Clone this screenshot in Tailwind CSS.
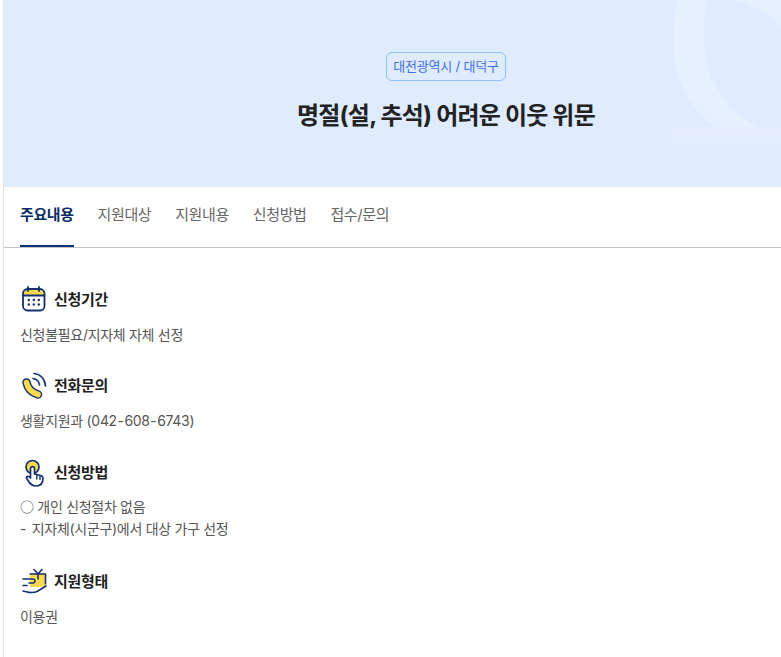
<!DOCTYPE html>
<html lang="ko">
  <head>
    <meta charset="UTF-8" />
    <script src="https://cdn.jsdelivr.net/npm/@tailwindcss/browser@4"></script>
    <title>명절(설, 추석) 어려운 이웃 위문</title>
  </head>
  <body class="bg-white font-['Inter','Noto_Sans_CJK_KR',sans-serif] overflow-hidden">
    <div class="ml-[3px] h-[657px] border-l border-[#e2e2e2] overflow-hidden">
      <!-- banner -->
      <div class="relative h-[187px] pl-[107px] bg-[#dfebff] overflow-hidden flex flex-col items-center">
        <svg class="absolute left-[650px] top-0" width="127" height="187" viewBox="0 0 127 187" fill="none">
          <defs>
            <linearGradient id="fade" x1="0" y1="0" x2="0" y2="1">
              <stop offset="0" stop-color="#e4eeff"/>
              <stop offset="1" stop-color="#dfebff"/>
            </linearGradient>
          </defs>
          <path d="M24 0C20 13 19 28 19 40C19 84 42 118 72 135L127 135L127 0Z" fill="#e7f0ff"/>
          <path d="M54 0C50 13 50 28 50 40C50 88 87 128 127 135L127 26C110 10 90 0 68 0Z" fill="#dfebff"/>
          <rect x="18" y="127" width="109" height="42" fill="url(#fade)"/>
        </svg>
        <div class="relative mt-[52px] h-[29px] px-[6px] flex items-center rounded-[6px] border border-[#8fc0fb] text-[13px] tracking-[-0.2px] text-[#3f6ff0]">대전광역시 / 대덕구</div>
        <h1 class="relative mt-[18px] text-[24px] leading-[34px] font-bold tracking-[-0.8px] text-[#222222]">명절(설, 추석) 어려운 이웃 위문</h1>
      </div>

      <!-- tabs -->
      <div class="h-[61px] border-b border-[#c4c4c4] pl-[16px] flex gap-[24px] text-[15px] tracking-[-0.4px] text-[#666666]">
        <a class="h-[60px] pt-[17px] font-bold text-[#0b2c63] border-b-2 border-[#0b3279]">주요내용</a>
        <a class="pt-[17px]">지원대상</a>
        <a class="pt-[17px]">지원내용</a>
        <a class="pt-[17px]">신청방법</a>
        <a class="pt-[17px]">접수/문의</a>
      </div>

      <!-- content -->
      <div class="pl-[16px] pt-[37px] text-[14px] leading-[22px] tracking-[-0.3px] text-[#555555]">
        <div class="h-[30px] flex items-center gap-[6px]">
          <svg class="w-[28px] h-[28px]" viewBox="0 0 28 28" fill="none">
            <path d="M3 9V6A3.500 3.500 0 0 1 6.500 3h14A3.500 3.500 0 0 1 24 6V9Z" fill="#fbd94e"/>
            <rect x="3" y="3" width="21.500" height="21.500" rx="4.500" stroke="#12316e" stroke-width="1.800"/>
            <path d="M3 9.500H24.500M8 1V5M19 1V5" stroke="#12316e" stroke-width="1.800" stroke-linecap="round"/>
            <g fill="#12316e"><circle cx="8.800" cy="14" r="1.200"/><circle cx="13.800" cy="14" r="1.200"/><circle cx="18.800" cy="14" r="1.200"/><circle cx="8.800" cy="18.500" r="1.200"/><circle cx="13.800" cy="18.500" r="1.200"/><circle cx="18.800" cy="18.500" r="1.200"/></g>
          </svg>
          <h3 class="text-[15px] font-bold text-[#1e1e1e]">신청기간</h3>
        </div>
        <p class="mt-[9px]">신청불필요/지자체 자체 선정</p>

        <div class="mt-[25px] h-[30px] flex items-center gap-[6px]">
          <svg class="w-[28px] h-[28px]" viewBox="0 0 28 28" fill="none">
            <path d="M6.500 10.500C7.500 16 12 20.500 18 22.500" stroke="#12316e" stroke-width="8.500" stroke-linecap="round"/>
            <path d="M6.500 10.500C7.500 16 12 20.500 18 22.500" stroke="#fbd94e" stroke-width="5.600" stroke-linecap="round"/>
            <path d="M13 6.500C16.500 7 19 9.500 19.500 13M14 1.500C20.500 2 25 7 25.500 14" stroke="#12316e" stroke-width="1.600" stroke-linecap="round"/>
          </svg>
          <h3 class="text-[15px] font-bold text-[#1e1e1e]">전화문의</h3>
        </div>
        <p class="mt-[9px]">생활지원과 (042<span class="mx-[0.7px]">-</span>608<span class="mx-[0.7px]">-</span>6743)</p>

        <div class="mt-[26px] h-[30px] flex items-center gap-[6px]">
          <svg class="w-[28px] h-[28px]" viewBox="0 0 28 28" fill="none">
            <circle cx="12.500" cy="8" r="6.500" fill="#fbd94e" stroke="#12316e" stroke-width="1.700"/>
            <path d="M10.500 19V9.500C10.500 7 14.500 7 14.500 9.500V15L20.500 16.500C22 17 23 18 23 19.500C23 24 20.500 27 16 27C12 27 10 25 8 21.500L6.500 19C6 17 9 16.500 10.500 19Z" fill="#ffffff" stroke="#12316e" stroke-width="1.700" stroke-linejoin="round"/>
            <path d="M16.800 16V20M20 17V20.500" stroke="#12316e" stroke-width="1.400" stroke-linecap="round"/>
          </svg>
          <h3 class="text-[15px] font-bold text-[#1e1e1e]">신청방법</h3>
        </div>
        <p class="mt-[7px]"><span class="font-['Noto_Sans_CJK_KR']">○</span> 개인 신청절차 없음<br /><span class="mr-[2px]">-</span> 지자체(시군구)에서 대상 가구 선정</p>

        <div class="mt-[27px] h-[30px] flex items-center gap-[6px]">
          <svg class="w-[28px] h-[28px]" viewBox="0 0 28 28" fill="none">
            <rect x="10" y="6" width="15" height="13" fill="#fbd94e"/>
            <path d="M18 6V11M14 1.500L18 6L22 1.500M10 6H25.500V16" stroke="#12316e" stroke-width="1.600" stroke-linecap="round" stroke-linejoin="round"/>
            <path d="M3 11H13C15.500 11 15.500 15 13 15H9M3 17.500H7M3 23C8 24 12 26 17 23.500L26 18" stroke="#12316e" stroke-width="1.600" stroke-linecap="round" stroke-linejoin="round"/>
          </svg>
          <h3 class="text-[15px] font-bold text-[#1e1e1e]">지원형태</h3>
        </div>
        <p class="mt-[9px]">이용권</p>
      </div>
    </div>
  </body>
</html>
